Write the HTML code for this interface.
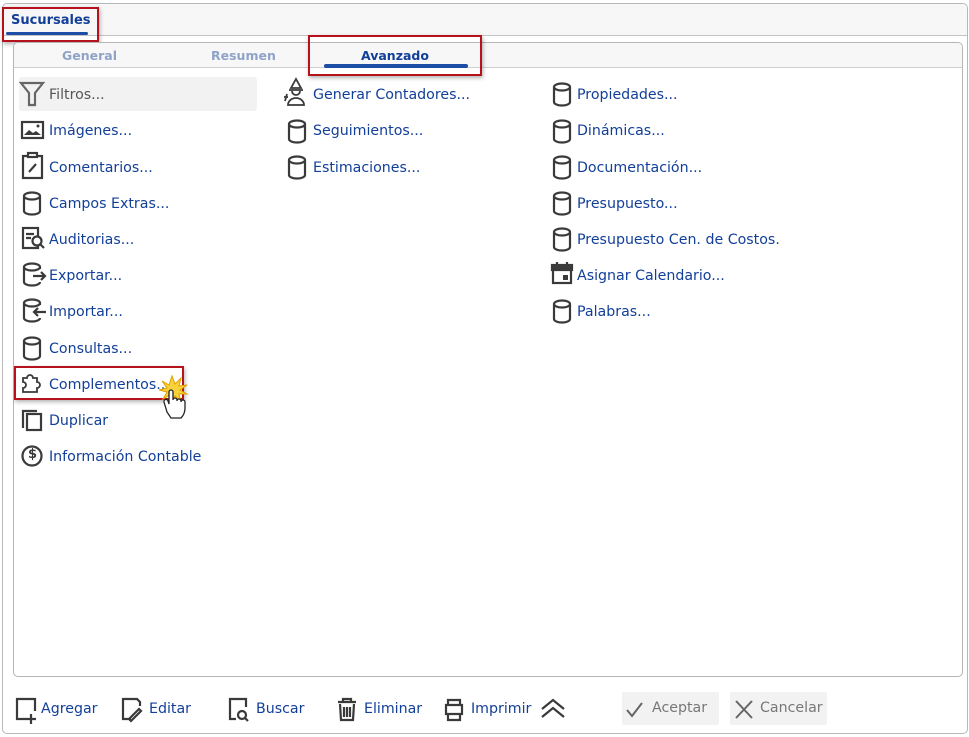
<!DOCTYPE html>
<html><head><meta charset="utf-8"><style>
*{margin:0;padding:0;box-sizing:border-box}
body{width:969px;height:737px;background:#fff;font-family:"DejaVu Sans","Liberation Sans",sans-serif;position:relative;overflow:hidden}
.abs{position:absolute}
.outer{left:2px;top:3px;width:966px;height:731px;border:1px solid #b8b8b8;border-radius:5px;background:#fff}
.tophdr{left:3px;top:4px;width:964px;height:32px;background:#f7f7f7;border-bottom:1px solid #c4c4c4;border-radius:5px 5px 0 0}
.panel{left:13px;top:42px;width:950px;height:635px;border:1px solid #b5b5b5;border-radius:5px;background:#fff}
.tabs{left:14px;top:43px;width:948px;height:25px;background:#f7f7f7;border-bottom:1px solid #cfcfcf;border-radius:5px 5px 0 0}
.tab{font-weight:bold;font-size:12.5px;color:#8fa3c9;top:48px}
.it{font-size:14.2px;color:#123f98;white-space:nowrap;line-height:18px}
.redbox{border:2px solid #b5121b;box-shadow:1px 2px 4px rgba(0,0,0,.3)}
.tb{font-size:14.2px;color:#123f98;top:701px}
.btn{top:692px;height:33px;background:#f2f2f2;border-radius:2px;font-size:14.2px;color:#777}
</style></head><body>
<div class="abs outer"></div>
<div class="abs tophdr"></div>
<div class="abs" style="left:11px;top:13px;font-size:13px;font-weight:bold;color:#123f98">Sucursales</div>
<div class="abs" style="left:6px;top:32px;width:82px;height:3px;background:#1d4ea6;border-radius:2px"></div>
<div class="abs redbox" style="left:2px;top:7px;width:97px;height:35px"></div>
<div class="abs panel"></div>
<div class="abs tabs"></div>
<div class="abs tab" style="left:62px">General</div>
<div class="abs tab" style="left:211px">Resumen</div>
<div class="abs tab" style="left:361px;color:#123f98">Avanzado</div>
<div class="abs" style="left:324px;top:64px;width:144px;height:4px;background:#1d4ea6;border-radius:2px"></div>
<div class="abs redbox" style="left:308px;top:35px;width:174px;height:41px"></div>
<div class="abs" style="left:19px;top:77px;width:238px;height:34px;background:#f2f2f2;border-radius:3px"></div>

<svg class="abs" width="969" height="737" style="left:0;top:0" fill="none" stroke="#3a3a3a" stroke-width="2.2">
<defs><g id="cyl"><path d="M0 4 a8 3.5 0 0 1 16 0 v15 a8 3.5 0 0 1 -16 0z M0 4 a8 3.5 0 0 0 16 0"/></g></defs>
<path d="M21 83 h22 l-8 10 v12 h-6 v-12z" stroke="#666"/>
<rect x="22" y="122" width="21" height="16"/><path d="M24 135 l5-5 4 3 3-2 5 4z" fill="#3a3a3a" stroke="none"/><circle cx="38" cy="126" r="1.5" fill="#3a3a3a" stroke="none"/>
<rect x="23" y="156" width="19" height="22"/><rect x="28" y="153" width="9" height="4" fill="#fff"/><path d="M29 172 l7-8"/>
<use href="#cyl" x="24" y="192"/>
<rect x="23" y="228" width="15" height="20"/><path d="M26 234h8M26 238h5"/><circle cx="37" cy="241" r="4.5" fill="#fff"/><path d="M40 244l4 4"/>
<path d="M40 269 v-2 a8 3.5 0 0 0 -16 0 v15 a8 3.5 0 0 0 16 0 M24 267 a8 3.5 0 0 0 16 0 M33 276 h12 M41 272l4 4-4 4"/>
<path d="M40 305 v-2 a8 3.5 0 0 0 -16 0 v15 a8 3.5 0 0 0 16 0 M24 303 a8 3.5 0 0 0 16 0 M46 312 h-12 M38 308l-4 4 4 4"/>
<use href="#cyl" x="24" y="337"/>
<path d="M23 378 h4 a3 3 0 0 1 6 0 h4 v4 a3 3 0 0 1 0 6 v4 h-14 v-4 a3 3 0 0 0 0-6z" stroke-width="1.8"/>
<path d="M23 428 v-17 h14"/><rect x="27" y="414" width="14" height="16"/>
<circle cx="32" cy="456" r="9.5"/>
<path d="M296 79 l5 9 h-10z M289 90 h14 M292 91 a4 4 0 0 0 8 0 M288 105 a8 7 0 0 1 16 0z M287 94 l-2 7 M284 97h4" stroke-width="1.8"/>
<use href="#cyl" x="289" y="120"/>
<use href="#cyl" x="289" y="156"/>
<use href="#cyl" x="554" y="83"/>
<use href="#cyl" x="554" y="120"/>
<use href="#cyl" x="554" y="156"/>
<use href="#cyl" x="554" y="192"/>
<use href="#cyl" x="554" y="228"/>
<rect x="553" y="266" width="18" height="17"/><rect x="552" y="265" width="20" height="5" fill="#3a3a3a"/><path d="M557 262v4M567 262v4"/><rect x="563" y="275" width="5" height="5" fill="#3a3a3a" stroke="none"/>
<use href="#cyl" x="554" y="300"/>
<path d="M26 719 h-9 v-20 h18 v12 M31 714 v10 M26 719 h10"/>
<path d="M131 719 h-8 v-20 h14 l3 3 v4 M129 719 l10-10 2 2 -10 10z"/>
<path d="M236 719 h-6 v-20 h16 v8"/><circle cx="242" cy="715" r="4"/><path d="M245 718l3 3"/>
<path d="M338 702h18M343 702v-3h8v3M340 704l1 16h12l1-16M344 707v10M347 707v10M350 707v10"/>
<path d="M448 705v-5h12v5M446 705h16v9h-16zM448 714v6h12v-6"/>
<path d="M542 709l11-9 11 9M542 717l11-9 11 9" stroke-width="2.2"/>
<path d="M627 710l5 6 10-13" stroke="#666"/>
<path d="M736 701l16 17M752 701l-16 17" stroke="#666"/>
</svg>
<div class="abs" style="left:28px;top:447px;font-size:13px;font-weight:bold;color:#3a3a3a">$</div>

<div class="abs it" style="left:49px;top:86px;color:#555">Filtros...</div>
<div class="abs it" style="left:49px;top:122px">Imágenes...</div>
<div class="abs it" style="left:49px;top:159px">Comentarios...</div>
<div class="abs it" style="left:49px;top:195px">Campos Extras...</div>
<div class="abs it" style="left:49px;top:231px">Auditorias...</div>
<div class="abs it" style="left:49px;top:267px">Exportar...</div>
<div class="abs it" style="left:49px;top:303px">Importar...</div>
<div class="abs it" style="left:49px;top:340px">Consultas...</div>
<div class="abs it" style="left:49px;top:376px">Complementos...</div>
<div class="abs it" style="left:49px;top:412px">Duplicar</div>
<div class="abs it" style="left:49px;top:448px">Información Contable</div>
<div class="abs it" style="left:313px;top:86px">Generar Contadores...</div>
<div class="abs it" style="left:313px;top:122px">Seguimientos...</div>
<div class="abs it" style="left:313px;top:159px">Estimaciones...</div>
<div class="abs it" style="left:577px;top:86px">Propiedades...</div>
<div class="abs it" style="left:577px;top:122px">Dinámicas...</div>
<div class="abs it" style="left:577px;top:159px">Documentación...</div>
<div class="abs it" style="left:577px;top:195px">Presupuesto...</div>
<div class="abs it" style="left:577px;top:231px">Presupuesto Cen. de Costos.</div>
<div class="abs it" style="left:577px;top:267px">Asignar Calendario...</div>
<div class="abs it" style="left:577px;top:303px">Palabras...</div>
<div class="abs redbox" style="left:14px;top:366px;width:170px;height:34px"></div>
<svg class="abs" style="left:155px;top:372px" width="40" height="50">
<path d="M17 4 l3 8 6-6 -2 8 8-1 -7 5 7 4 -8 0 2 8 -6-6 -3 7 -2-8 -7 4 4-7 -8-2 8-2 -5-7 7 4z" fill="#f7d23a" stroke="#e0a000" stroke-width="1"/>
<path d="M12 40 l-3-10 a2 2 0 0 1 4-1 l1 3 v-12 a2 2 0 0 1 4 0 v8 a2 2 0 0 1 4 0 v1 a2 2 0 0 1 4 0 v1 a2 2 0 0 1 4 0 v6 c0 5-2 8-4 10 h-10z" fill="#fff" stroke="#222" stroke-width="1.3"/>
</svg>

<div class="abs tb" style="left:41px">Agregar</div>
<div class="abs tb" style="left:149px">Editar</div>
<div class="abs tb" style="left:256px">Buscar</div>
<div class="abs tb" style="left:364px">Eliminar</div>
<div class="abs tb" style="left:471px">Imprimir</div>
<div class="abs btn" style="left:622px;width:97px"><span style="position:absolute;left:30px;top:8px">Aceptar</span></div>
<div class="abs btn" style="left:730px;width:97px"><span style="position:absolute;left:30px;top:8px">Cancelar</span></div>
<svg class="abs" width="969" height="737" style="left:0;top:0" fill="none" stroke="#666" stroke-width="2">
<path d="M627 710l5 6 10-13"/><path d="M736 701l16 17M752 701l-16 17"/>
</svg>
</body></html>
